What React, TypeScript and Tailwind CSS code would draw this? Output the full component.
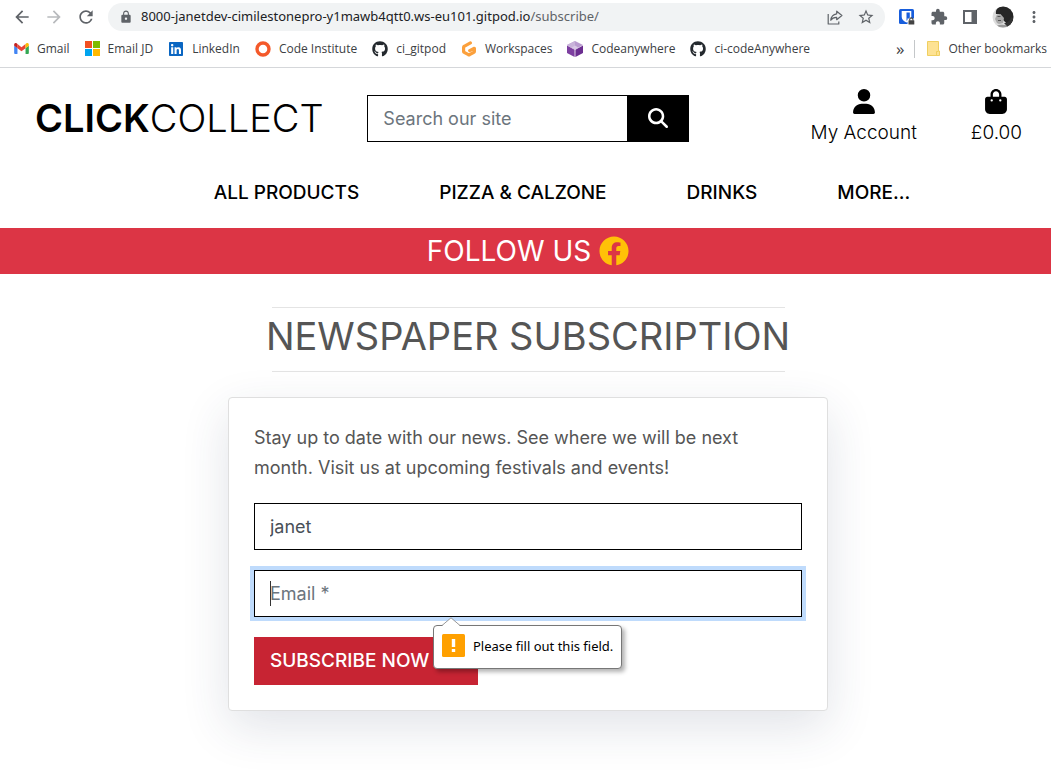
import React from "react";
import { MdArrowBack, MdArrowForward, MdRefresh, MdLock, MdStarBorder, MdExtension, MdMoreVert } from "react-icons/md";
import { FaUser, FaBagShopping, FaMagnifyingGlass } from "react-icons/fa6";
import { FaFacebook, FaGithub, FaLinkedin } from "react-icons/fa";

function GmailIcon() {
  return (
    <svg viewBox="0 0 16 12" className="h-[11px] w-[15px]" aria-hidden="true">
      <path d="M0 3v8a1 1 0 0 0 1 1h2.6V5.5z" fill="#4285f4" />
      <path d="M16 3v8a1 1 0 0 1-1 1h-2.6V5.5z" fill="#34a853" />
      <path d="M3.600 1.200v4.500L8 9l4.400-3.300V1.200L8 4.500z" fill="#ea4335" />
      <path d="M0 3V1.600C0 .2 1.500-.5 2.600.4l1 .8v4.500z" fill="#c5221f" />
      <path d="M16 3V1.600c0-1.400-1.500-2.100-2.600-1.200l-1 .8v4.500z" fill="#fbbc04" />
    </svg>
  );
}

function MicrosoftIcon() {
  return (
    <svg viewBox="0 0 15 15" className="size-[15px]" aria-hidden="true">
      <path d="M0 0h7v7H0z" fill="#f25022" />
      <path d="M8 0h7v7H8z" fill="#7fba00" />
      <path d="M0 8h7v7H0z" fill="#00a4ef" />
      <path d="M8 8h7v7H8z" fill="#ffb900" />
    </svg>
  );
}

function InstituteIcon() {
  return (
    <svg viewBox="0 0 16 16" className="size-4" aria-hidden="true">
      <circle cx="8" cy="8" r="6" fill="none" stroke="#f4592a" strokeWidth="3.400" />
    </svg>
  );
}

function GitpodIcon() {
  return (
    <svg viewBox="0 0 16 16" className="size-4" aria-hidden="true" fill="none" stroke="#fba03c" strokeWidth="3.200" strokeLinecap="round" strokeLinejoin="round">
      <path d="M9.400 1.900 3.200 5.300a1 1 0 0 0-.6.900v4.200c0 .4.200.7.600.9l4.200 2.400c.4.200.8.200 1.200 0l4.200-2.400a1 1 0 0 0 .6-.9V7.300L8.700 9.600" />
    </svg>
  );
}

function CubeIcon() {
  return (
    <svg viewBox="0 0 16 16" className="size-4" aria-hidden="true">
      <path d="m8 0 8 4-8 4.500L0 4z" fill="#b99bcf" />
      <path d="M8 0v8.500L0 4z" fill="#c9b3da" />
      <path d="M0 4.500 7.600 8.700V16L0 12z" fill="#7d3fa0" />
      <path d="M16 4.500 8.400 8.700V16l7.600-4z" fill="#6b2d90" />
      <path d="m8 4.500 3.300 1.900L8 8.300 4.700 6.400z" fill="#d9c8e6" />
    </svg>
  );
}

function ShareIcon() {
  return (
    <svg viewBox="0 0 16 15" className="h-[15px] w-4" aria-hidden="true" fill="none" stroke="#5f6368" strokeWidth="1.200" strokeLinejoin="round">
      <path d="M1.200 4v10h10.600v-2.500" />
      <path d="M9.700 1.200 14.900 5.500 9.700 9.700V7.400C6.900 7.300 5 8.300 3.800 10.300c.3-3.500 2.300-6 5.900-6.500z" />
    </svg>
  );
}

function ShieldIcon() {
  return (
    <svg viewBox="0 0 16 16" className="size-4" aria-hidden="true">
      <rect width="15" height="15" rx="1.500" fill="#175ddc" />
      <path d="M2.700 2h9.600v6c0 2.600-2.200 4.300-4.800 5.500C4.900 12.300 2.700 10.600 2.700 8z" fill="#fff" />
      <path d="M7.500 3.500h3.300V8c0 1.500-1.300 2.800-3.300 3.800z" fill="#175ddc" />
      <rect x="8.500" y="9.500" width="7.500" height="6.500" fill="#fff" />
      <path d="M10.700 11.500v-1a1.600 1.600 0 0 1 3.200 0v1" fill="none" stroke="#444" strokeWidth="1.100" />
      <rect x="9.500" y="11.300" width="5.800" height="4.200" rx=".5" fill="#444" />
    </svg>
  );
}

function PanelIcon() {
  return (
    <svg viewBox="0 0 14 14" className="size-3.5" aria-hidden="true">
      <path d="M0 0h14v14H0zM2 2v10h6.500V2z" fill="#5f6368" fillRule="evenodd" />
    </svg>
  );
}

function Avatar() {
  return (
    <svg viewBox="0 0 22 22" className="size-[22px]" aria-hidden="true">
      <defs>
        <clipPath id="avatar"><circle cx="11" cy="11" r="10.500" /></clipPath>
      </defs>
      <g clipPath="url(#avatar)">
        <path d="M0 0h22v22H0z" fill="#dcdcdc" />
        <path d="M4 8C3 2 8 0 13 0c7 0 10 5 9 11s-3 8-8 10c1-3 0-5-2-6L7 8z" fill="#262626" />
        <path d="M5 8.500 8.500 8l3.500 4-1 5-4 1-2-1-2-4z" fill="#a9a9a9" />
        <path d="M5.500 10.500h3M6 14.500h3" stroke="#555" />
        <path d="M3 22c1-3 5-4 9-3l5-1 3 5z" fill="#999" />
        <path d="M12 17c3 0 6-2 7-6l3 2-5 9z" fill="#333" />
      </g>
    </svg>
  );
}

function FolderIcon() {
  return (
    <svg viewBox="0 0 13 15" className="h-[15px] w-[13px]" aria-hidden="true">
      <path d="M.5.500h11v9.500h1v4.500H.5z" fill="#fde293" stroke="#f0cf60" />
      <path d="M9.500 14v-3.500h2" fill="none" stroke="#f0cf60" />
    </svg>
  );
}

const bookmarks = [
  { label: "Gmail", icon: <GmailIcon /> },
  { label: "Email JD", icon: <MicrosoftIcon /> },
  { label: "LinkedIn", icon: <FaLinkedin className="size-4 text-[#0a66c2]" /> },
  { label: "Code Institute", icon: <InstituteIcon /> },
  { label: "ci_gitpod", icon: <FaGithub className="size-4 text-[#24292e]" /> },
  { label: "Workspaces", icon: <GitpodIcon /> },
  { label: "Codeanywhere", icon: <CubeIcon /> },
  { label: "ci-codeAnywhere", icon: <FaGithub className="size-4 text-[#24292e]" /> },
];

function BrowserBar() {
  return (
    <div className="border-b border-[#d5d7da] bg-white font-['Noto_Sans',sans-serif] text-[#3c4043]">
      <div className="flex h-[34px] items-center pr-3 pl-3">
        <div className="flex w-24 items-center gap-3 text-[#5f6368]">
          <button aria-label="Back"><MdArrowBack className="size-5" /></button>
          <button aria-label="Forward" className="text-[#b8babd]"><MdArrowForward className="size-5" /></button>
          <button aria-label="Reload"><MdRefresh className="size-5" /></button>
        </div>
        <div className="flex h-7 flex-1 items-center rounded-full bg-[#f1f3f4] pr-2.5 pl-[11px] text-[#5f6368]">
          <MdLock className="mr-2 size-3.5" />
          <p className="flex-1 text-[13px] whitespace-nowrap">
            <span className="text-[#202124]">8000-janetdev-cimilestonepro-y1mawb4qtt0.ws-eu101.gitpod.io</span>/subscribe/
          </p>
          <button aria-label="Share" className="mr-3.5"><ShareIcon /></button>
          <button aria-label="Bookmark this page"><MdStarBorder className="size-[18px]" /></button>
        </div>
        <div className="ml-3.5 flex items-center gap-[15px] text-[#5f6368]">
          <button aria-label="Password manager"><ShieldIcon /></button>
          <button aria-label="Extensions"><MdExtension className="size-[18px]" /></button>
          <button aria-label="Side panel"><PanelIcon /></button>
          <button aria-label="Profile"><Avatar /></button>
          <button aria-label="Menu" className="-mx-1"><MdMoreVert className="size-[18px]" /></button>
        </div>
      </div>
      <nav aria-label="Bookmarks" className="flex h-[33px] items-center pr-1 pb-1 pl-3.5 font-['Open_Sans',sans-serif] text-[12px] whitespace-nowrap">
        {bookmarks.map((b) => (
          <a key={b.label} href="#" className="mr-[15px] flex items-center gap-2">
            {b.icon}
            {b.label}
          </a>
        ))}
        <button aria-label="More bookmarks" className="ml-auto text-[17px] leading-4">»</button>
        <a href="#" className="ml-2.5 flex items-center gap-2 border-l border-[#c4c7c9] pl-3">
          <FolderIcon />
          Other bookmarks
        </a>
      </nav>
    </div>
  );
}

function Header() {
  return (
    <header className="text-black">
      <div className="grid h-[100px] grid-cols-3 items-center">
        <a href="#" className="pl-[35px] text-[38px] leading-none font-light whitespace-nowrap">
          <strong className="font-semibold">CLICK</strong>COLLECT
        </a>
        <form className="flex h-[47px] pr-3 pl-[17px]" onSubmit={(e) => e.preventDefault()}>
          <input aria-label="Search our site" placeholder="Search our site" className="min-w-0 flex-1 border border-black px-[15px] text-[18px] placeholder:text-[#6c757d] outline-none" />
          <button aria-label="Search" className="flex w-[61px] items-center justify-center bg-black text-white">
            <FaMagnifyingGlass className="size-5" />
          </button>
        </form>
        <div className="flex justify-end gap-[54px] pr-[29px] text-[19px] leading-[30px] font-light">
          <a href="#" className="flex flex-col items-center">
            <FaUser className="mb-1 h-[25px] w-[22px]" />
            My Account
          </a>
          <a href="#" className="flex flex-col items-center">
            <FaBagShopping className="mb-1 h-[25px] w-[22px]" />
            £0.00
          </a>
        </div>
      </div>
      <nav aria-label="Main" className="flex h-[60px] justify-center gap-20 pt-2.5 pl-[73px] text-[19px] leading-[30px] font-medium">
        <a href="#">ALL PRODUCTS</a>
        <a href="#">PIZZA &amp; CALZONE</a>
        <a href="#">DRINKS</a>
        <a href="#">MORE...</a>
      </nav>
    </header>
  );
}

function ValidationTip() {
  return (
    <div role="alert" className="absolute top-[55px] left-[179px] z-10 flex h-11 items-center gap-2 rounded border border-[#777] bg-white px-2 font-['Noto_Sans',sans-serif] text-[13px] whitespace-nowrap text-black shadow-[3px_3px_4px_rgba(0,0,0,0.3)]">
      <svg viewBox="0 0 18 9" className="absolute -top-[9px] left-2 h-[9px] w-[18px]" aria-hidden="true">
        <path d="M0 9 9 .8 18 9z" fill="#fff" />
        <path d="M0 8.500 9 .8l9 7.700" fill="none" stroke="#999" />
      </svg>
      <svg viewBox="0 0 23 23" className="mb-1 size-[23px]" aria-hidden="true">
        <rect width="23" height="23" rx="1.500" fill="#ffa000" />
        <path d="M9.800 5h3.400v8H9.800zM9.800 15h3.400v3H9.800z" fill="#fff" />
      </svg>
      Please fill out this field.
    </div>
  );
}

export default function App() {
  return (
    <div className="min-h-screen overflow-hidden bg-white font-['Inter',sans-serif]">
      <BrowserBar />
      <Header />
      <div className="flex h-[46px] items-center justify-center gap-2 bg-[#dc3545] pl-[5px] text-[28px] text-white">
        FOLLOW US
        <a href="#" aria-label="Facebook" className="text-[#ffc107]"><FaFacebook className="size-[30px]" /></a>
      </div>
      <main className="flex flex-col items-center pt-[33px] pb-16 pl-[5px] text-[#555]">
        <h1 className="flex w-full max-w-[513px] justify-center border-y border-[#e4e4e4] pt-1 pb-[11px] text-[38px] leading-[48px] font-normal whitespace-nowrap">
          NEWSPAPER SUBSCRIPTION
        </h1>
        <form
          noValidate
          onSubmit={(e) => e.preventDefault()}
          className="mt-[25px] w-full max-w-[600px] rounded border border-[#dfdfdf] bg-white p-[25px] text-[18px] shadow-[0_16px_48px_rgba(40,60,90,0.14)]"
        >
          <p className="mb-5 leading-[30px]">
            Stay up to date with our news. See where we will be next month. Visit us at upcoming festivals and events!
          </p>
          <input aria-label="Name" defaultValue="janet" className="mb-5 block h-[47px] w-full border border-black px-[15px] text-[#495057] outline-none" />
          <div className="relative mb-5">
            <input type="email" required aria-label="Email" placeholder="Email *" className="block h-[47px] w-full border border-black px-[15px] ring-4 ring-[#bfdbfc] outline-none placeholder:text-[#6c757d]" />
            <span className="absolute top-[11px] left-4 h-[25px] w-px bg-[#333]" />
            <ValidationTip />
          </div>
          <button className="block h-12 w-56 bg-[#c72433] px-4 text-left text-[19px] font-medium text-white">SUBSCRIBE NOW</button>
        </form>
      </main>
    </div>
  );
}
